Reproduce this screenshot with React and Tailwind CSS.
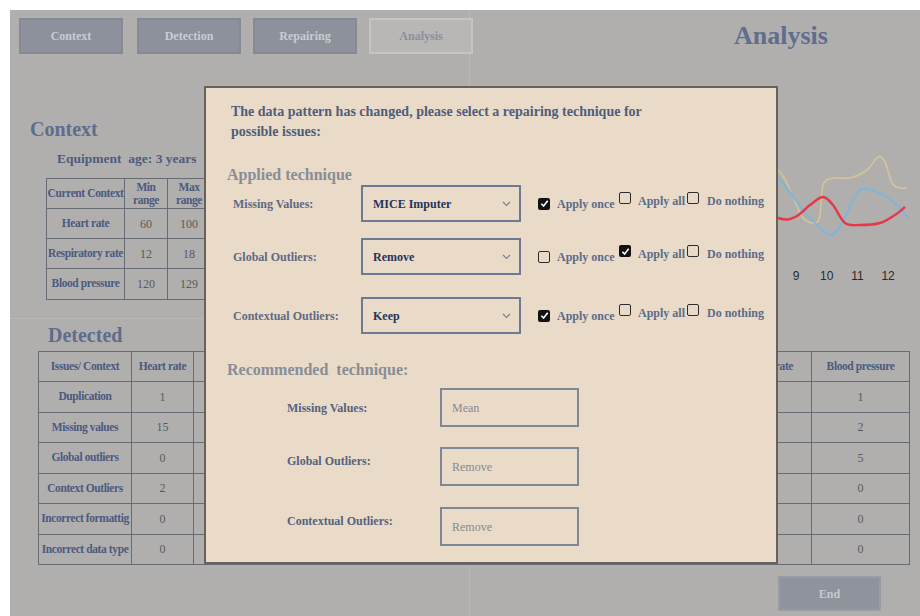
import React from "react";

// smooth line through points (catmull-rom turned into cubic beziers)
const smooth = (pts) => {
  let d = `M ${pts[0][0]} ${pts[0][1]}`;
  for (let i = 0; i < pts.length - 1; i++) {
    const p0 = pts[i - 1] || pts[i];
    const p1 = pts[i];
    const p2 = pts[i + 1];
    const p3 = pts[i + 2] || p2;
    const c1 = [p1[0] + (p2[0] - p0[0]) / 6, p1[1] + (p2[1] - p0[1]) / 6];
    const c2 = [p2[0] - (p3[0] - p1[0]) / 6, p2[1] - (p3[1] - p1[1]) / 6];
    d += ` C ${c1[0]} ${c1[1]}, ${c2[0]} ${c2[1]}, ${p2[0]} ${p2[1]}`;
  }
  return d;
};

const tanLine = [[260, 10], [298, 30], [313, 57], [323, 78], [335, 83], [340, 75], [343, 45], [353, 38], [370, 38], [387, 30], [398, 17], [405, 22], [412, 43], [420, 48], [427, 48]];
const blueLine = [[260, 10], [298, 38], [323, 70], [340, 88], [353, 95], [365, 77], [377, 53], [387, 49], [407, 57], [420, 68], [428, 78]];
const redLine = [[260, 60], [298, 78], [315, 77], [330, 65], [343, 57], [353, 65], [365, 83], [380, 85], [400, 83], [415, 75], [425, 67]];

const months = [1, 2, 3, 4, 5, 6, 7, 8, 9, 10, 11, 12];

const contextRows = [
  ["Heart rate", 60, 100],
  ["Respiratory rate", 12, 18],
  ["Blood pressure", 120, 129],
];

// middle columns sit under the dialog, so they stay blank here
const detectedCols = [
  ["Issues/ Context", 93],
  ["Heart rate", 62],
  ["", 108],
  ["", 199],
  ["", 199],
  ["Respiratory rate", 112],
  ["Blood pressure", 98],
];

const detectedRows = [
  ["Duplication", 1, "", "", "", "", 1],
  ["Missing values", 15, "", "", "", "", 2],
  ["Global outliers", 0, "", "", "", "", 5],
  ["Context Outliers", 2, "", "", "", "", 0],
  ["Incorrect formattig", 0, "", "", "", "", 0],
  ["Incorrect data type", 0, "", "", "", "", 0],
];

const applied = [
  { label: "Missing Values:", value: "MICE Imputer", checks: [true, false, false], mt: "mt-0" },
  { label: "Global Outliers:", value: "Remove", checks: [false, true, false], mt: "mt-[16px]" },
  { label: "Contextual Outliers:", value: "Keep", checks: [true, false, false], mt: "mt-[22px]" },
];

const recommended = [
  { label: "Missing Values:", value: "Mean", mt: "mt-[8px]", lift: "" },
  { label: "Global Outliers:", value: "Remove", mt: "mt-[20px]", lift: "pb-[12px]" },
  { label: "Contextual Outliers:", value: "Remove", mt: "mt-[21px]", lift: "pb-[12px]" },
];

const NavButton = ({ children, active }) => (
  <button
    className={
      active
        ? "h-[36px] w-[104px] shrink-0 border-2 border-[#c6c5c3] bg-[#b8b7b5] text-[12px] font-bold text-[#8a8f9b]"
        : "h-[36px] w-[104px] shrink-0 border-2 border-[#858a94] bg-[#8c919b] text-[12px] font-bold text-[#c9ccd2]"
    }
  >
    {children}
  </button>
);

const Check = ({ on }) =>
  on ? (
    <span className="flex h-[12px] w-[12px] shrink-0 items-center justify-center rounded-[2px] bg-[#111111]">
      <svg viewBox="0 0 12 12" className="h-[11px] w-[11px]">
        <path d="M2.6 6.3 5 8.7 9.5 3" fill="none" stroke="#ffffff" strokeWidth="1.8" />
      </svg>
    </span>
  ) : (
    <span className="block h-[12px] w-[12px] shrink-0 rounded-[2px] border-[1.5px] border-[#2e2e2e]" />
  );

const Chevron = () => (
  <svg width="9" height="6" viewBox="0 0 9 6">
    <polyline points="1,1 4.5,4.5 8,1" fill="none" stroke="#7a8092" strokeWidth="1.1" />
  </svg>
);

const CheckGroup = ({ checks }) => (
  <div className="ml-[17px] flex items-center text-[12px] font-bold text-[#5d6b8b]">
    <div className="flex w-[81px] items-center gap-[7px]">
      <Check on={checks[0]} />
      <span>Apply once</span>
    </div>
    <div className="flex w-[68px] items-center gap-[7px] pb-[5px]">
      <span className="mb-[6px]">
        <Check on={checks[1]} />
      </span>
      <span>Apply all</span>
    </div>
    <div className="flex items-center gap-[8px] pb-[5px]">
      <span className="mb-[6px]">
        <Check on={checks[2]} />
      </span>
      <span>Do nothing</span>
    </div>
  </div>
);

const cell = "border border-[#676b74] p-0 text-center whitespace-nowrap";
const label = "text-[11.5px] font-bold tracking-[-0.4px] text-[#4b5a80]";

export default function App() {
  return (
    <div className="min-h-screen bg-white pl-[10px] pt-[10px] font-['Liberation_Serif','Times_New_Roman',serif]">
      <div className="relative flex h-[606px] w-[910px] bg-[#b0afad]">
        {/* left half: tabs, context, detected issues */}
        <div className="flex w-[460px] shrink-0 flex-col border-r border-[#bab9b7]">
          <nav className="ml-[9px] mt-[8px] flex">
            <NavButton>Context</NavButton>
            <div className="ml-[14px]">
              <NavButton>Detection</NavButton>
            </div>
            <div className="ml-[12px]">
              <NavButton>Repairing</NavButton>
            </div>
            <div className="ml-[12px]">
              <NavButton active>Analysis</NavButton>
            </div>
          </nav>

          <section className="border-b border-[#bab9b7] pb-[18px]">
            <h2 className="ml-[20px] mt-[63px] text-[20px] font-bold leading-[24px] text-[#5e6d8d]">Context</h2>
            <p className="ml-[47px] mt-[10px] text-[13.5px] font-bold leading-[16px] text-[#4e5c7e]">
              Equipment&nbsp; age: 3 years
            </p>
            <table className="ml-[36px] mt-[11px] table-fixed border-collapse">
              <colgroup>
                <col className="w-[78px]" />
                <col className="w-[43px]" />
                <col className="w-[43px]" />
              </colgroup>
              <thead>
                <tr className={`h-[30px] leading-[13px] ${label}`}>
                  <th className={cell}>Current Context</th>
                  <th className={cell}>
                    Min
                    <br />
                    range
                  </th>
                  <th className={cell}>
                    Max
                    <br />
                    range
                  </th>
                </tr>
              </thead>
              <tbody>
                {contextRows.map((r, i) => (
                  <tr key={r[0]} className={i === 2 ? "h-[31px]" : "h-[30px]"}>
                    <td className={`${cell} ${label}`}>{r[0]}</td>
                    <td className={`${cell} text-[12px] text-[#5a5a5a]`}>{r[1]}</td>
                    <td className={`${cell} text-[12px] text-[#5a5a5a]`}>{r[2]}</td>
                  </tr>
                ))}
              </tbody>
            </table>
          </section>

          <section>
            <h2 className="ml-[38px] mt-[4px] text-[20px] font-bold leading-[24px] text-[#5e6d8d]">Detected</h2>
            <table className="ml-[28px] mt-[4px] w-[871px] table-fixed border-collapse">
              <colgroup>
                {detectedCols.map(([name, w], i) => (
                  <col key={i} style={{ width: w }} />
                ))}
              </colgroup>
              <thead>
                <tr className={`h-[30px] ${label}`}>
                  {detectedCols.map(([name], i) => (
                    <th key={i} className={cell}>
                      {name}
                    </th>
                  ))}
                </tr>
              </thead>
              <tbody>
                {detectedRows.map((r) => (
                  <tr key={r[0]} className="h-[30.5px]">
                    <td className={`${cell} ${label}`}>{r[0]}</td>
                    {r.slice(1).map((v, j) => (
                      <td key={j} className={`${cell} text-[12px] text-[#5a5a5a]`}>
                        {v}
                      </td>
                    ))}
                  </tr>
                ))}
              </tbody>
            </table>
          </section>
        </div>

        {/* right half: title, trend chart, end */}
        <div className="flex flex-1 flex-col">
          <h1 className="ml-[264px] mt-[11px] text-[26px] font-bold leading-[30px] text-[#5f6e8e]">Analysis</h1>
          <svg width="430" height="150" viewBox="0 0 430 150" className="ml-[10px] mt-[89px]">
            <path d={smooth(tanLine)} fill="none" stroke="#d5c49b" strokeWidth="1.6" />
            <path d={smooth(blueLine)} fill="none" stroke="#7db5db" strokeWidth="2" />
            <path d={smooth(redLine)} fill="none" stroke="#e6374b" strokeWidth="2.4" />
            {months.map((m) => (
              <text
                key={m}
                x={316 - (9 - m) * 30.7}
                y="140"
                textAnchor="middle"
                fontSize="12"
                fill="#2a2a2a"
                fontFamily="Liberation Sans, Arial, sans-serif"
              >
                {m}
              </text>
            ))}
          </svg>
          <button className="mb-[5px] ml-[308px] mt-auto h-[35px] w-[103px] border-2 border-[#999ca3] bg-[#8e939c] text-[12px] font-bold text-[#c5c8ce]">
            End
          </button>
        </div>

        {/* repairing technique dialog */}
        <div className="absolute left-[194px] top-[76px] z-10 h-[478px] w-[574px] border-2 border-[#67625d] bg-[#e9dbc8] pl-[21px] pt-[14px]">
          <p className="ml-[4px] text-[14px] font-bold leading-[20px] text-[#4f5d7c]">
            The data pattern has changed, please select a repairing technique for
            <br />
            possible issues:
          </p>
          <h3 className="mt-[23px] text-[16px] font-bold leading-[20px] text-[#898d96]">Applied technique</h3>

          {applied.map((row) => (
            <div key={row.label} className={`${row.mt} flex items-center`}>
              <div className="w-[134px] pl-[6px] text-[12px] font-bold text-[#5f6a84]">{row.label}</div>
              <div className="flex h-[37px] w-[160px] items-center justify-between border-2 border-[#6e7a93] pl-[10px] pr-[8px] text-[12px] font-bold text-[#26335a]">
                <span>{row.value}</span>
                <Chevron />
              </div>
              <CheckGroup checks={row.checks} />
            </div>
          ))}

          <h3 className="mt-[26px] text-[16px] font-bold leading-[20px] text-[#898d96]">Recommended&nbsp; technique:</h3>

          {recommended.map((row) => (
            <div key={row.label} className={`${row.mt} flex items-center`}>
              <div className={`w-[213px] pl-[60px] text-[12px] font-bold text-[#56627f] ${row.lift}`}>{row.label}</div>
              <div className="flex h-[39px] w-[139px] items-center border-2 border-[#7f8899] pl-[10px] text-[12px] text-[#878a90]">
                {row.value}
              </div>
            </div>
          ))}
        </div>
      </div>
    </div>
  );
}
